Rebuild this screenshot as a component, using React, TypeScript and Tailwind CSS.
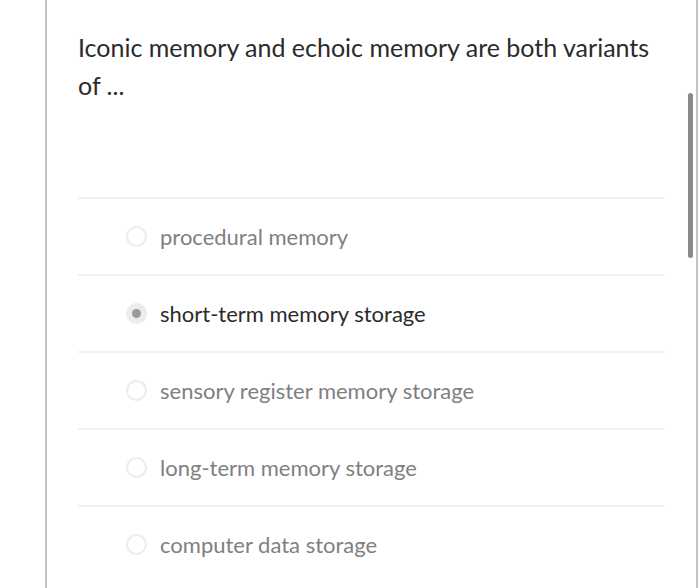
import { useState } from "react";

const options = [
  "procedural memory",
  "short-term memory storage",
  "sensory register memory storage",
  "long-term memory storage",
  "computer data storage",
];

function Radio({ checked }: { checked: boolean }) {
  return checked ? (
    <span className="flex h-[21px] w-[21px] items-center justify-center rounded-full bg-[#ececec]">
      <span className="h-[9px] w-[9px] rounded-full bg-[#9a9a9a]" />
    </span>
  ) : (
    <span className="h-[21px] w-[21px] rounded-full border-2 border-[#ececec] bg-white" />
  );
}

export default function App() {
  const [selected, setSelected] = useState(1);

  return (
    <div className="flex h-[588px] w-[700px] bg-white font-['Lato','Noto_Sans',sans-serif]">
      <div className="ml-[45px] mr-[2px] flex flex-1 border-x-2 border-[#c4c4c4] relative overflow-hidden">
        <div className="flex-1 px-[31px] pt-[28px]">
          <h1 className="pr-[10px] text-[25px] leading-[38px] text-[#2b2b2b]">
            Iconic memory and echoic memory are both variants of ...
          </h1>
          <ul className="mt-[93px]">
            {options.map((opt, i) => (
              <li
                key={opt}
                onClick={() => setSelected(i)}
                className="flex h-[77px] cursor-pointer items-center gap-[13px] border-t-2 border-[#f0f0f0] pl-[48px]"
              >
                <Radio checked={selected === i} />
                <span
                  className={
                    selected === i
                      ? "text-[22px] text-[#2b2b2b]"
                      : "text-[22px] text-[#808080]"
                  }
                >
                  {opt}
                </span>
              </li>
            ))}
          </ul>
        </div>
        <div className="absolute right-[3px] top-[93px] h-[165px] w-[5px] rounded-full bg-[#8a8a8a]" />
      </div>
    </div>
  );
}
